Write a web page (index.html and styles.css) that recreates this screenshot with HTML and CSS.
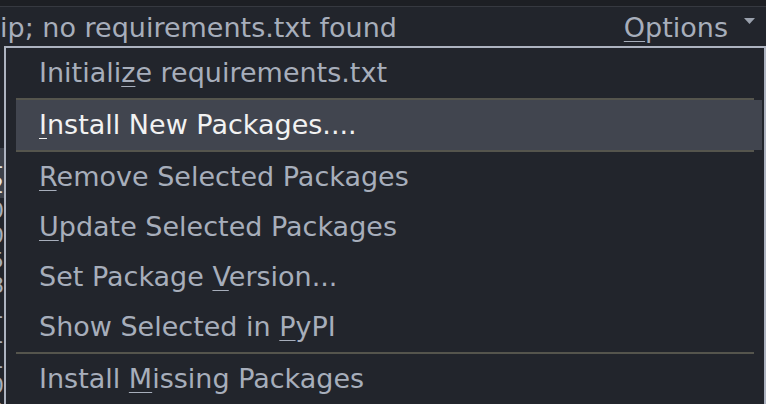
FILE: index.html
```html
<!DOCTYPE html>
<html>
<head>
<meta charset="utf-8">
<link rel="stylesheet" href="styles.css">
</head>
<body>
<div class="topbar"></div>
<div class="header">
  <span class="status">ip; no requirements.txt found</span>
  <span class="options"><span class="mn">O</span>ptions
    <svg class="caret" width="11" height="6" viewBox="0 0 11 6"><polygon points="0,0 11,0 5.5,6" fill="#9aa1ad"/></svg>
  </span>
</div>
<div class="body">
  <div class="side">
    <div class="srow"></div>
    <div class="srow"></div>
    <div class="srow sel"><span>41</span></div>
    <div class="srow sel"><span>12</span></div>
    <div class="srow"><span>10</span></div>
    <div class="srow"><span>10</span></div>
    <div class="srow"><span>15</span></div>
    <div class="srow"><span>18</span></div>
    <div class="srow"><span>11</span></div>
    <div class="srow"><span>11</span></div>
    <div class="srow"><span>11</span></div>
    <div class="srow"><span>10</span></div>
    <div class="srow"><span>10</span></div>
  </div>
  <div class="menu">
    <div class="item">Initiali<span class="mn">z</span>e requirements.txt</div>
    <div class="item active"><span class="mn">I</span>nstall New Packages....</div>
    <div class="item"><span class="mn">R</span>emove Selected Packages</div>
    <div class="item"><span class="mn">U</span>pdate Selected Packages</div>
    <div class="item">Set Package <span class="mn">V</span>ersion...</div>
    <div class="item">Show Selected in <span class="mn">P</span>yPI</div>
    <div class="sep"></div>
    <div class="item">Install <span class="mn">M</span>issing Packages</div>
  </div>
</div>
</body>
</html>
```
FILE: styles.css
```css
html, body {
  margin: 0;
  padding: 0;
}
body {
  width: 766px;
  height: 404px;
  overflow: hidden;
  background: #22252c;
  font-family: "DejaVu Sans", sans-serif;
  font-size: 27px;
  color: #a7aebb;
  position: relative;
}
.topbar {
  height: 6px;
  background: #1d1f24;
  border-bottom: 1px solid #363940;
}
.header {
  height: 40px;
  line-height: 40px;
  display: flex;
  justify-content: space-between;
  align-items: center;
  white-space: nowrap;
}
.status {
  padding-top: 1px;
}
.options {
  display: flex;
  align-items: center;
  padding-right: 11px;
  padding-top: 1px;
}
.caret {
  margin-left: 16px;
  margin-top: -14px;
}
.mn {
  text-decoration: underline;
  text-underline-offset: 4px;
  text-decoration-thickness: 1px;
}
.body {
  display: flex;
  height: 357px;
  overflow: hidden;
}
.side {
  width: 4px;
  padding-top: 51px;
  font-size: 22px;
  color: #a7aebb;
}
.srow {
  height: 25px;
  line-height: 25px;
  overflow: hidden;
  display: flex;
  justify-content: flex-end;
}
.srow.sel {
  background: #3d414a;
  color: #e6e6e6;
}
.menu {
  position: absolute;
  left: 4px;
  right: 0;
  top: 46px;
  bottom: 0;
  border: 2px solid #adb3c0;
  border-bottom: none;
  background: #22252c;
  white-space: nowrap;
  overflow: hidden;
}
.item {
  height: 50px;
  line-height: 50px;
  padding-left: 33px;
}
.item.active {
  position: relative;
  margin: 2px 2px 2px 10px;
  padding-left: 23px;
  background: #41454f;
  color: #f2f2f2;
}
.item.active::before,
.item.active::after {
  content: "";
  position: absolute;
  left: 0;
  right: 8px;
  height: 2px;
  background: #55554d;
}
.item.active::before { top: -2px; }
.item.active::after { bottom: -2px; }
.sep {
  height: 2px;
  margin: 0 10px;
  background: #55554d;
}
```
